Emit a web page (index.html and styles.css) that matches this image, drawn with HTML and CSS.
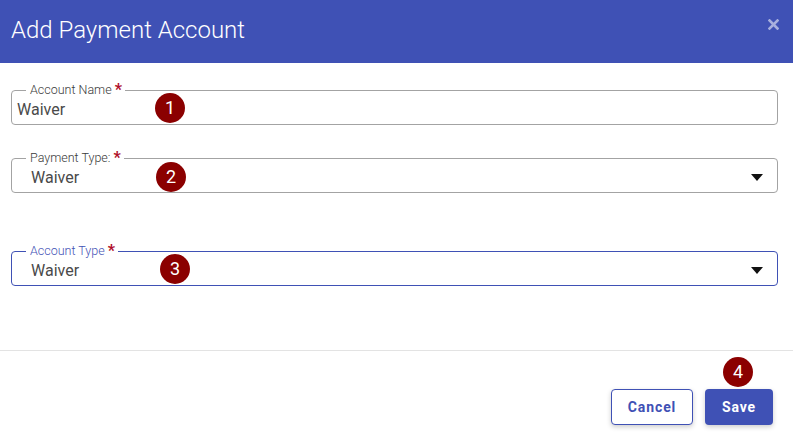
FILE: index.html
```html
<!DOCTYPE html>
<html>
<head>
    <title>Add Payment Account</title>
    <link rel="stylesheet" href="styles.css">
</head>
<body>
    <div class="dialog">
        <div class="dialog-header">
            <h2>Add Payment Account</h2>
            <span class="close">
                <svg width="11" height="11" viewBox="0 0 11 11"><path d="M1.5 1.5 L9.5 9.5 M9.5 1.5 L1.5 9.5" stroke="currentColor" stroke-width="2.6" stroke-linecap="square"/></svg>
            </span>
        </div>

        <div class="dialog-body">
            <fieldset class="field">
                <legend>Account Name <span class="req">*</span></legend>
                <div class="value value-input">Waiver</div>
            </fieldset>

            <fieldset class="field field-gap-1">
                <legend>Payment Type: <span class="req">*</span></legend>
                <div class="value value-select">
                    <span>Waiver</span>
                    <span class="arrow"></span>
                </div>
            </fieldset>

            <fieldset class="field field-focus field-gap-2">
                <legend>Account Type <span class="req">*</span></legend>
                <div class="value value-select">
                    <span>Waiver</span>
                    <span class="arrow"></span>
                </div>
            </fieldset>
        </div>

        <div class="dialog-footer">
            <button class="btn btn-outline">Cancel</button>
            <button class="btn btn-primary">Save</button>
        </div>

        <!-- step markers -->
        <span class="badge b1">1</span>
        <span class="badge b2">2</span>
        <span class="badge b3">3</span>
        <span class="badge b4">4</span>
    </div>
</body>
</html>
```

FILE: styles.css
```css
body {
    margin: 0;
    font-family: Roboto, "Liberation Sans", sans-serif;
    background: #fff;
}
.dialog {
    position: relative;
    width: 793px;
    height: 442px;
    overflow: hidden;
}
.dialog-header {
    height: 63px;
    background: #3f51b5;
    display: flex;
    align-items: center;
    justify-content: space-between;
    padding: 0 14px 0 11px;
}
.dialog-header h2 {
    margin: 0;
    padding-bottom: 4px;
    color: #fff;
    font-size: 24px;
    font-weight: 300;
}
.close {
    color: rgba(255, 255, 255, 0.55);
    display: flex;
    margin-top: -14px;
}
.dialog-body {
    padding: 20px 15px 0 11px;
    height: 267px;
    border-bottom: 1px solid #e3e3e3;
}
.field {
    margin: 0;
    padding: 0;
    border: 1px solid #a3a3a3;
    border-radius: 4px;
}
.field legend {
    margin-left: 14px;
    padding: 0 3px 0 4px;
    font-size: 12.5px;
    line-height: 14px;
    font-weight: 300;
    color: #3a3a3a;
}
.req {
    color: #b0102a;
    font-size: 16px;
    line-height: 10px;
    font-weight: 700;
    position: relative;
    top: 1px;
}
.field-gap-1 {
    margin-top: 26px;
}
.field-gap-2 {
    margin-top: 51px;
}
.field-focus {
    border-color: #3f51b5;
}
.field-focus legend {
    color: #3f51b5;
}
.value {
    height: 27px;
    font-size: 16px;
    color: #4a4a4a;
    display: flex;
    align-items: center;
    padding-bottom: 2px;
    box-sizing: border-box;
}
.value-input {
    padding-left: 5px;
}
.value-select {
    padding-left: 19px;
    padding-right: 14px;
    justify-content: space-between;
}
.arrow {
    width: 0;
    height: 0;
    border-left: 6px solid transparent;
    border-right: 6px solid transparent;
    border-top: 7px solid #111;
}
.dialog-footer {
    display: flex;
    justify-content: flex-end;
    gap: 12px;
    padding: 38px 20px 0 0;
}
.btn {
    height: 36px;
    font-family: Roboto, "Liberation Sans", sans-serif;
    font-size: 14px;
    font-weight: 700;
    letter-spacing: 0.9px;
    border-radius: 4px;
    cursor: pointer;
    box-shadow: 0 2px 5px rgba(0, 0, 0, 0.2);
}
.btn-outline {
    width: 82px;
    background: #fff;
    color: #3f51b5;
    border: 1px solid #3f51b5;
}
.btn-primary {
    width: 68px;
    background: #3f51b5;
    color: #fff;
    border: none;
}
.badge {
    position: absolute;
    width: 30px;
    height: 30px;
    border-radius: 50%;
    background: #8b0000;
    color: #fff;
    font-size: 18px;
    line-height: 30px;
    text-align: center;
}
.b1 { left: 155px; top: 93px; }
.b2 { left: 156px; top: 162px; }
.b3 { left: 160px; top: 254px; }
.b4 { left: 723px; top: 357px; }
```
